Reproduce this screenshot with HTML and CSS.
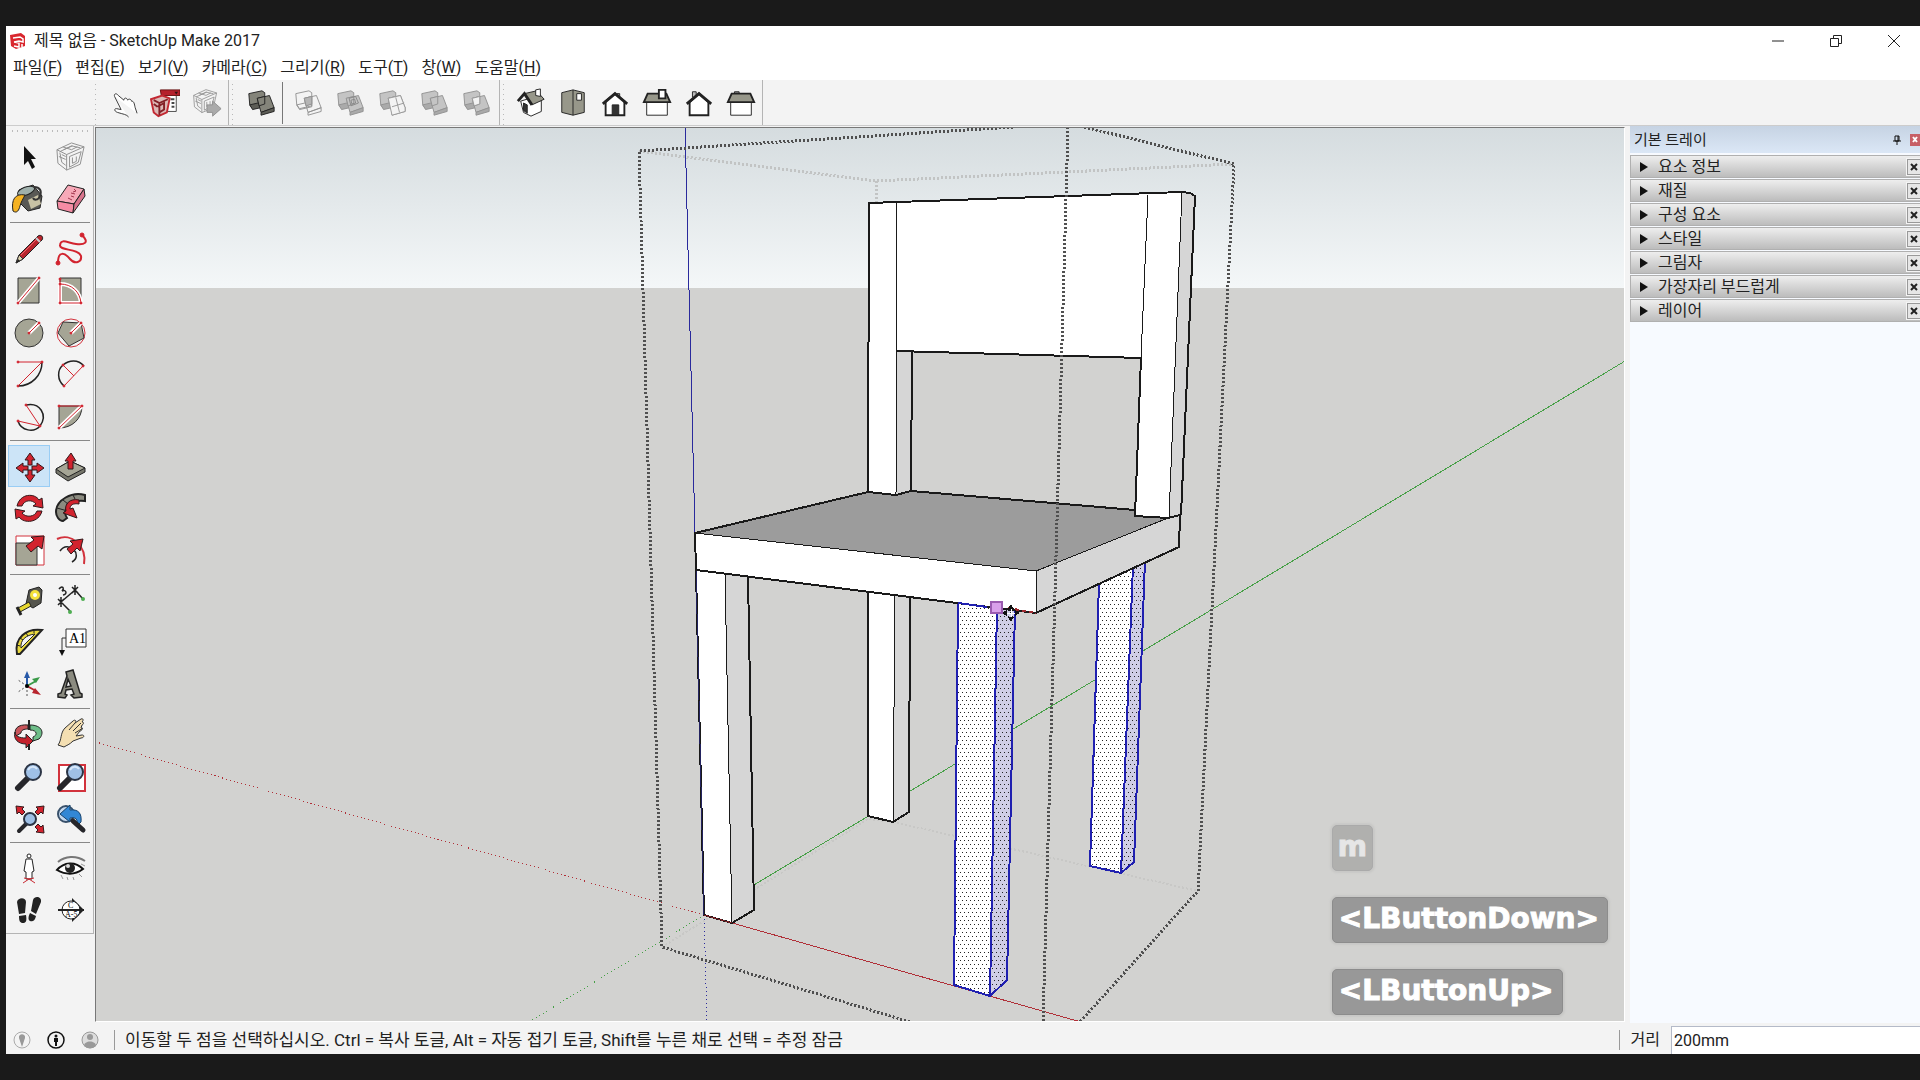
FILE: index.html
```html
<!DOCTYPE html>
<html lang="ko">
<head>
  <meta charset="UTF-8">
  <meta name="viewport" content="width=device-width, initial-scale=1.0">
  <title>제목 없음 - SketchUp Make 2017</title>
  <link rel="stylesheet" href="styles.css">
</head>
<body>

<svg class="defs" aria-hidden="true">
  <symbol id="solids" viewBox="0 0 32 32">
    <path class="face" d="M3 6l14-3 3 2v14l-13 3-3-4z"/>
    <path class="side" d="M4 18l13-3 3 2v3l-13 3z"/>
    <path class="face" d="M12 11l13-3 5 13-14 5z"/>
    <path class="side" d="M16 26l14-5v4l-14 4z"/>
    <path class="face" d="M12 11l8-2v8l-6 2z"/>
  </symbol>
  <symbol id="cube" viewBox="0 0 32 32">
    <path d="M2 9l15-7 13 4-4 18-14 6-9-7zM2 9l10 5 18-8M12 14v16M5 11l12-6 9 2M5 12l2 10 4 3M15 16l12-5-3 11-9 5zM9 9l9-4M7 14l4 2M18 17v6l4-2v-5M8 6l9 3 6-3M4 16l7 3"/>
  </symbol>
  <symbol id="lens" viewBox="0 0 32 32">
    <path d="M14 19L5 28" stroke="#26262a" stroke-width="6" stroke-linecap="round"/>
    <circle cx="20" cy="12" r="8" fill="#9fc0e6" stroke="#2b3444" stroke-width="2"/>
    <path d="M15 10c2-4 7-4 9-1" fill="none" stroke="#d8e8fa" stroke-width="2"/>
  </symbol>
</svg>

<div class="window">
  <header class="titlebar">
    <svg class="logo" viewBox="0 0 18 18"><path d="M1 3l11-2 4 3v10l-9 3-5-3z" fill="#d9272e"/><path d="M4 6l7-1 3 2v3l-4-1-5 1M5 10l5 1v4l-5-1M13 12v3" fill="none" stroke="#fff" stroke-width="1.5"/></svg>
    <h1>제목 없음 - SketchUp Make 2017</h1>
    <div class="window-buttons">
      <button aria-label="최소화"><svg viewBox="0 0 14 14"><path d="M1 7h12"/></svg></button>
      <button aria-label="이전 크기로"><svg viewBox="0 0 14 14"><path d="M1.500 4.500h8v8h-8zM4.500 4V1.500h8v8H10"/></svg></button>
      <button aria-label="닫기"><svg viewBox="0 0 14 14"><path d="M1 1l12 12M13 1L1 13"/></svg></button>
    </div>
  </header>

  <nav class="menubar">
    <button>파일(<u>F</u>)</button>
    <button>편집(<u>E</u>)</button>
    <button>보기(<u>V</u>)</button>
    <button>카메라(<u>C</u>)</button>
    <button>그리기(<u>R</u>)</button>
    <button>도구(<u>T</u>)</button>
    <button>창(<u>W</u>)</button>
    <button>도움말(<u>H</u>)</button>
  </nav>

  <div class="toolbars">
    <div class="toolbar warehouse">
      <button aria-label="상호작용"><svg viewBox="0 0 32 32"><path d="M7 9c-1-3 2-4 4-1l6 5c0-3 3-3 4 0 1-2 4-1 4 1 3 0 3 3 4 7l2 6M22 31c-2-3-6-3-12-5-3-1-4-4-1-4l5 1L7 9" fill="#fff" stroke="#333"/></svg></button>
      <button aria-label="3D Warehouse"><svg viewBox="0 0 32 32"><path d="M15 7h13v18H17z" fill="#fff" stroke="#444"/><path d="M11 2h21v6H12z" fill="#b5202c" stroke="#611"/><path d="M26 4h4l-2 3z" fill="#311"/><path d="M22 12h4M23 16h3M23 20h3" stroke="#444" stroke-width="2"/><path d="M1 12l12-4 8 3-3 15-9 4-5-4z" fill="#dcb8b6" stroke="#c22832" stroke-width="2"/><path d="M4 13l6 3 9-4M10 16v13M8 20l7-4v7l-5 3M4 17l4 3" fill="none" stroke="#832027" stroke-width="2"/></svg></button>
      <button aria-label="모델 공유"><svg class="wire" viewBox="0 0 32 32"><use href="#cube" width="28" height="28"/><path d="M16 18h6v-4l9 8-9 8v-4h-6z" fill="#aaa"/></svg></button>
    </div>
    <div class="toolbar solid-tools">
      <button class="outer" aria-label="외피"><svg class="solid dark" viewBox="0 0 32 32"><use href="#solids"/></svg></button>
      <button aria-label="교차"><svg class="solid hollow" viewBox="0 0 32 32"><use href="#solids"/><path class="mid" d="M12 11l8-2v8l-6 2z"/></svg></button>
      <button aria-label="결합"><svg class="solid" viewBox="0 0 32 32"><use href="#solids"/><path class="hole" d="M15 11l7-2 3 7-8 3zM17 13l4-1 1 4-4 1z"/></svg></button>
      <button aria-label="빼기"><svg class="solid" viewBox="0 0 32 32"><use href="#solids"/><path class="cut" d="M12 11l13-3 5 13v4l-14 4zM16 20l13-4M20 10l4 16"/></svg></button>
      <button aria-label="자르기"><svg class="solid" viewBox="0 0 32 32"><use href="#solids"/></svg></button>
      <button aria-label="분할"><svg class="solid" viewBox="0 0 32 32"><use href="#solids"/><path class="cut" d="M12 11l8-2v8l-6 2z"/></svg></button>
    </div>
    <div class="toolbar views">
      <button aria-label="등각투영"><svg class="house" viewBox="0 0 32 32"><path d="M5 14l3 12 8 4 11-5V14l-9-4z" fill="#fff"/><path d="M8 16l4 2v9l-4-3z" fill="#333"/><path class="roof" d="M9 6l13-3 8 9-13 6z"/><path d="M2 14l7-8 8 12" fill="none" stroke-width="3"/><path d="M21 2l5-1v8l-5-1z" fill="#fff"/></svg></button>
      <button aria-label="상단"><svg class="house" viewBox="0 0 32 32"><path class="roof" d="M4 5l12-3 12 3v21l-12 3-12-3z"/><path d="M16 2v27"/><path d="M20 6h5v7h-5z" fill="#fff"/></svg></button>
      <button aria-label="전면"><svg class="house" viewBox="0 0 32 32"><path d="M6 14v15h20V14L16 6z" fill="#fff" stroke-width="2"/><path d="M18 6h3v5" fill="#999"/><path d="M3 17L16 6l13 11" fill="none" stroke-width="3"/><path d="M13 18h7v11h-7z" fill="#333"/></svg></button>
      <button aria-label="우측"><svg class="house" viewBox="0 0 32 32"><path d="M5 14h22v15H5z" fill="#fff"/><path class="roof" d="M6 6h20l4 9H2z" stroke-width="2"/><path d="M18 2h7v9h-7z" fill="#fff" stroke-width="2"/></svg></button>
      <button aria-label="후면"><svg class="house" viewBox="0 0 32 32"><path d="M9 10V4h4v4" fill="#bbb"/><path d="M6 15v14h20V15L16 6z" fill="#fff" stroke-width="2"/><path d="M3 17L16 6l13 11" fill="none" stroke-width="3"/></svg></button>
      <button aria-label="좌측"><svg class="house" viewBox="0 0 32 32"><path d="M9 6V4h5v2" fill="#999"/><path d="M5 15h22v14H5z" fill="#fff"/><path class="roof" d="M6 6h20l4 9H2z" stroke-width="2"/></svg></button>
    </div>
  </div>

  <main class="workspace">
    <aside class="tools">
      <div class="grip"></div>
      <div class="tool-group">
        <button aria-label="선택"><svg viewBox="0 0 32 32"><path d="M11 6v19l4-4 4 8 3-2-4-8h5z" fill="#111"/></svg></button>
        <button aria-label="구성 요소 만들기"><svg class="wire" viewBox="0 0 32 32"><use href="#cube" y="1" width="31" height="31"/></svg></button>
        <button aria-label="페인트 통"><svg viewBox="0 0 32 32"><path d="M6 8L20 3l9 11-2 12-12 3-9-9z" fill="#595955" stroke="#222"/><ellipse cx="13" cy="9" rx="9" ry="4" transform="rotate(-20 13 9)" fill="#9fb0ac" stroke="#222"/><path d="M15 18l10-5 3 9-10 5z" fill="#c8c2a4"/><path d="M21 5c6 0 8 4 6 9s-6 4-7 2" fill="none" stroke="#333" stroke-width="2"/><path d="M12 13C2 11-2 18 0 29c4 3 6-1 7-5s3-7 5-11z" fill="#f4b223" stroke="#222"/></svg></button>
        <button aria-label="지우개"><svg viewBox="0 0 32 32"><path d="M13 3l16 4-10 15L2 19z" fill="#f7a9b8" stroke="#222"/><path d="M2 19l17 3-1 9-15-4z" fill="#f58ca4" stroke="#222"/><path d="M29 7l1 7-12 17 1-9z" fill="#d9748c" stroke="#222"/><path d="M19 7l2 2-3 1M16 11l4 1M16 14l3 1M13 16l4 2" fill="none" stroke="#a3364e"/></svg></button>
      </div>
      <div class="tool-group">
        <button aria-label="선"><svg viewBox="0 0 32 32"><path d="M3 31l3-8L25 4c3-2 6 1 4 4L10 27z" fill="#b8242c" stroke="#222"/><path d="M3 31l3-8 4 4z" fill="#ddd3ae" stroke="#333"/><path d="M3 31l2-4 2 2z" fill="#222"/><path d="M23 6l4 4" stroke="#ccc" stroke-width="2"/><path d="M8 23L23 8" stroke="#ed666c"/></svg></button>
        <button aria-label="자유형"><svg class="redline" viewBox="0 0 32 32"><path d="M27 3c8 8 2 10-6 9S6 6 5 13c-1 6 18 3 21 11 1 6-6 9-11 3S3 18 3 31" stroke-width="2"/><circle cx="27" cy="3" r="2"/><circle cx="3" cy="31" r="2"/></svg></button>
        <button aria-label="사각형"><svg viewBox="0 0 32 32"><path class="shape" d="M5 4h21v25H5z"/><path d="M5 29L26 4" stroke="#fff" stroke-width="4"/><g class="redline"><path d="M5 29L26 4"/><circle cx="5" cy="29" r="1"/><circle cx="26" cy="4" r="1"/></g></svg></button>
        <button aria-label="회전된 사각형"><svg viewBox="0 0 32 32"><path class="shape" d="M5 4h21v25H5z"/><path d="M5 10c12 0 20 8 21 19H5z" fill="none" stroke="#fff" stroke-width="4"/><g class="redline"><path d="M5 10c12 0 20 8 21 19H5V4"/><circle cx="5" cy="5" r="1"/><circle cx="5" cy="10" r="1"/><circle cx="5" cy="29" r="1"/><circle cx="26" cy="29" r="1"/></g></svg></button>
        <button aria-label="원"><svg viewBox="0 0 32 32"><circle class="shape" cx="16" cy="17" r="14"/><path d="M16 17l10-10" stroke="#fff" stroke-width="4"/><g class="redline"><path d="M16 17L26 7"/><circle cx="16" cy="17" r="1"/><circle cx="26" cy="7" r="1"/></g></svg></button>
        <button aria-label="다각형"><svg viewBox="0 0 32 32"><circle cx="16" cy="17" r="14" fill="none" stroke="#d2323c"/><path class="shape" d="M8 6l18 1 3 15-15 8L3 17z"/><path d="M16 17l10-10" stroke="#fff" stroke-width="4"/><g class="redline"><path d="M16 17L26 7"/><circle cx="16" cy="17" r="1"/><circle cx="26" cy="7" r="1"/></g></svg></button>
        <button aria-label="호"><svg viewBox="0 0 32 32"><path class="black" d="M29 4c0 13-10 24-24 24"/><g class="redline"><path d="M5 4h24L5 28"/><circle cx="5" cy="4" r="1"/><circle cx="29" cy="4" r="1"/><circle cx="5" cy="28" r="1"/></g></svg></button>
        <button aria-label="2점 호"><svg viewBox="0 0 32 32"><path class="black" d="M9 28C2 22 2 12 8 7s15-6 21 1"/><g class="redline"><path d="M9 28L28 8M8 7l11 11"/><circle cx="8" cy="7" r="1"/><circle cx="28" cy="8" r="1"/><circle cx="9" cy="28" r="1"/></g></svg></button>
        <button aria-label="3점 호"><svg viewBox="0 0 32 32"><path class="black" d="M13 5c14-3 22 10 14 21-6 7-19 5-22-5"/><g class="redline"><path d="M5 21l22 5L13 5"/><circle cx="13" cy="5" r="1"/><circle cx="5" cy="21" r="1"/><circle cx="27" cy="26" r="1"/></g></svg></button>
        <button aria-label="파이"><svg viewBox="0 0 32 32"><path class="shape" d="M4 6h23c0 13-10 22-23 22z"/><path d="M4 28L27 6" stroke="#fff" stroke-width="4"/><g class="redline"><path d="M4 28L27 6H4"/><circle cx="4" cy="6" r="1"/><circle cx="27" cy="6" r="1"/><circle cx="4" cy="28" r="1"/></g></svg></button>
      </div>
      <div class="tool-group">
        <button class="active" aria-label="이동"><svg class="red" viewBox="0 0 32 32"><path d="M17 3l5 7h-3v5h-4v-5h-3zM17 32l5-7h-3v-5h-4v5h-3zM3 18l7-5v3h5v4h-5v3zM31 18l-7-5v3h-5v4h5v3z"/></svg></button>
        <button aria-label="밀기/끌기"><svg viewBox="0 0 32 32"><path d="M1 19l14-8 15 7v4l-17 9L1 23z" fill="#77776c" stroke="#222"/><path d="M1 19l14-8 15 7-17 9z" fill="#a5a595" stroke="#222"/><path class="red" d="M16 3l5 8h-3v8h-5v-8h-3z"/></svg></button>
        <button aria-label="회전"><svg class="red" viewBox="0 0 32 32"><path d="M4 14C7 1 22 1 26 8l3-2 1 10-10-2 3-2c-4-5-12-4-14 2zM29 19c-3 12-18 13-23 6l-3 2-1-10 10 2-3 2c4 5 13 4 15-2z"/></svg></button>
        <button aria-label="따라가기"><svg viewBox="0 0 32 32"><path d="M30 9V3C17-1 1 8 1 20c0 4 3 9 7 9l4-3C6 17 16 7 30 9z" fill="#8b8b80" stroke="#222" stroke-width="2"/><path class="red" d="M24 8C15 6 9 12 11 19l-3 2 14 5-4-10-3 1c0-4 3-6 9-5z"/><path d="M2 16l7 2M8 8l5 4M18 3l2 4" stroke="#222"/></svg></button>
        <button aria-label="배율"><svg viewBox="0 0 32 32"><path d="M3 2h28v29H3z" fill="#fff" stroke="#d2323c"/><path class="shape" d="M3 9h21v22H3z"/><path class="red" d="M31 2l-2 13-4-3-7 6-5-6 8-6-3-3z"/></svg></button>
        <button aria-label="오프셋"><svg viewBox="0 0 32 32"><path d="M2 5c14-7 30 7 27 25" fill="none" stroke="#d2323c" stroke-width="2"/><path class="black" d="M5 17c8-12 24 4 12 11"/><path class="red" d="M28 5l-3 12-3-3-6 6-4-5 6-5-3-3z"/></svg></button>
      </div>
      <div class="tool-group">
        <button aria-label="줄자"><svg viewBox="0 0 32 32"><path d="M16 6l10-3 3 3-1 13-8 5-7-4z" fill="#55554d" stroke="#222"/><circle cx="22" cy="11" r="5" fill="#f4e13b"/><circle cx="22" cy="11" r="2" fill="#fff"/><path d="M16 18l2 4-11 6-2-4z" fill="#e7d72f" stroke="#222"/><path d="M4 23l4 8" stroke="#222" stroke-width="3"/></svg></button>
        <button aria-label="치수"><svg viewBox="0 0 32 32"><path class="black" d="M6 18L20 6m-3-3l6 6m0-6l-6 6m3-8v10M3 15l6 6m0-6l-6 6m3-8v10M20 6l8 9M6 18l9 9M4 5c3-4 6-1 3 2 4-2 6 3 1 4"/><circle cx="28" cy="15" r="2" fill="#4fae52"/><circle cx="15" cy="28" r="2" fill="#4fae52"/></svg></button>
        <button aria-label="각도기"><svg viewBox="0 0 32 32"><path d="M4 28C1 12 13 2 29 4L7 28z" fill="#e9d940" stroke="#222" stroke-width="2"/><path d="M8 22C7 14 13 9 22 8z" fill="#f4f4f4" stroke="#222"/><path d="M4 19l3 1M7 12l3 2M13 7l2 3M21 5v2" stroke="#222"/></svg></button>
        <button aria-label="텍스트"><svg viewBox="0 0 32 32"><path d="M11 3h20v18H11z" fill="#fff" stroke="#333"/><path d="M11 12H7v13" fill="none" stroke="#333"/><path d="M4 24h6l-3 6z" fill="#111"/><text x="14" y="17">A1</text></svg></button>
        <button aria-label="축"><svg viewBox="0 0 32 32"><path d="M14 18v-8" stroke="#2759a8" stroke-width="2"/><path d="M11 10l3-7 3 7z" fill="#2759a8"/><path d="M14 18l9-5" stroke="#3a9a48" stroke-width="2"/><path d="M19 11l8-2-4 6z" fill="#3a9a48"/><path d="M14 18l9 5" stroke="#b8252e" stroke-width="2"/><path d="M22 20l6 7-9-2z" fill="#b8252e"/><path d="M14 18v12M14 18L5 24M14 18L5 12" stroke="#555" stroke-dasharray="2 2"/><circle cx="14" cy="18" r="2"/></svg></button>
        <button aria-label="3D 텍스트"><svg viewBox="0 0 32 32"><path d="M11 4l7-2 7 23 2 1v3l-8 1-3-3 3-1-2-5-6 1-1 4 2 1-2 3-7-1v-3l3-1 6-17zM13 11l-2 8 5-1z" fill="#8b8b80" fill-rule="evenodd" stroke="#222" stroke-width="1.500"/></svg></button>
      </div>
      <div class="tool-group">
        <button aria-label="궤도"><svg viewBox="0 0 32 32"><path d="M15 7C5 6 0 11 3 18l5-3c0-3 3-4 7-4z" fill="#c8545a" stroke="#222"/><path d="M17 7c12 0 15 8 9 14l-6 2v-4c5-2 4-7-3-7z" fill="#6dbd88" stroke="#222"/><path d="M2 14c0 4 4 6 11 6v-4l7 7-7 7v-4C5 26 0 21 2 14z" fill="#c4212c" stroke="#222"/><path d="M16 2v10M16 26v6" stroke="#222" stroke-width="2"/></svg></button>
        <button aria-label="화면 이동"><svg viewBox="0 0 32 32"><path d="M3 27c4-5 2-12 7-17l8-7c2-2 4 0 2 2l6-4c2-1 3 1 1 3 2 0 2 2 0 3l-1 3c2 0 1 3-1 3l-4 5 6-1c3 0 2 3-1 3l-8 3c-4 4-6 4-9 6z" fill="#f4dfb2" stroke="#333"/><path d="M14 12l6-7M18 13l8-8M20 15l8-5" stroke="#333"/></svg></button>
        <button aria-label="확대/축소"><svg viewBox="0 0 32 32"><use href="#lens"/></svg></button>
        <button aria-label="창 확대/축소"><svg viewBox="0 0 32 32"><path d="M4 5h26v26H4z" fill="#fff" stroke="#d2323c" stroke-width="2"/><use href="#lens"/></svg></button>
        <button aria-label="범위 확대/축소"><svg viewBox="0 0 32 32"><path class="red" d="M3 4l8 1-2 2 3 3-3 3-3-3-2 2zM31 4l-8 1 2 2-3 3 3 3 3-3 2 2zM31 31l-8-1 2-2-3-3 3-3 3 3 2-2z"/><path d="M13 22l-7 7" stroke="#26262a" stroke-width="4" stroke-linecap="round"/><circle cx="17" cy="17" r="6" fill="#9fc0e6" stroke="#2b3444" stroke-width="2"/></svg></button>
        <button aria-label="이전"><svg viewBox="0 0 32 32"><circle cx="11" cy="12" r="8" fill="#c4d8ef" stroke="#38506a" stroke-width="2"/><path d="M5 12l10-9v5c8-1 12 3 11 12l-4 4c1-7-1-9-7-8v4z" fill="#3287d5" stroke="#17426b"/><path d="M18 19l10 9" stroke="#26262a" stroke-width="5" stroke-linecap="round"/></svg></button>
      </div>
      <div class="tool-group">
        <button aria-label="카메라 배치"><svg viewBox="0 0 32 32"><circle cx="16" cy="4" r="2" fill="#fff" stroke="#222"/><path d="M13 7h6l2 12-2 1v7h-6v-7l-2-1z" fill="#fff" stroke="#222"/><path d="M10 31l6-4 6 4M11 26l5 1 5-1" fill="none" stroke="#c82831"/></svg></button>
        <button aria-label="둘러보기"><svg viewBox="0 0 32 32"><path d="M3 10c7-6 18-7 27-1" fill="none" stroke="#777" stroke-width="2"/><path d="M2 18c7-8 18-9 26-1-8 6-17 6-26 1z" fill="#fff" stroke="#111" stroke-width="2"/><circle cx="15" cy="16" r="5" fill="#222"/><circle cx="13" cy="14" r="2" fill="#ddd"/><path d="M6 23l2 4M12 25l1 3M18 25l1 3M24 22l3 3M26 12l4 2" stroke="#999"/></svg></button>
        <button aria-label="걷기"><svg viewBox="0 0 32 32"><path d="M4 8c1-5 9-5 9 0l-1 11-6 1zM6 22l7-1c1 6 0 8-3 8s-4-2-4-7zM20 6c2-5 9-3 8 2l-5 12-5-3zM17 19l6 3c-1 5-4 6-6 5s-2-4 0-8z" fill="#222"/></svg></button>
        <button aria-label="단면 평면"><svg viewBox="0 0 32 32"><path d="M17 4l12 12-12 12z" fill="#222"/><circle cx="16" cy="16" r="9" fill="#fff" stroke="#222"/><path d="M3 16h26" stroke="#222" stroke-width="2"/><text class="tiny" x="13" y="14">C</text><text class="tiny" x="10" y="23">A-5</text></svg></button>
      </div>
    </aside>

    <section class="canvas">
      <svg class="scene" viewBox="96 128 1528 893" preserveAspectRatio="xMinYMin slice">
        <defs>
          <linearGradient id="sky" x1="0" y1="0" x2="0" y2="1">
            <stop offset="0" stop-color="#d5dcdf"/>
            <stop offset="1" stop-color="#f4f7f8"/>
          </linearGradient>
          <pattern id="dots" width="8" height="8" patternUnits="userSpaceOnUse">
            <path d="M0 0h1v1H0zM4 0h1v1H4zM2 4h1v1H2zM6 4h1v1H6z" fill="#222"/>
          </pattern>
        </defs>
        <rect x="96" y="128" width="1900" height="160" fill="url(#sky)"/>
        <rect x="96" y="288" width="1900" height="900" fill="#d2d2d0"/>

        <!-- axes -->
        <g class="axis">
          <path class="blue" d="M685 127L695 533"/>
          <path class="blue far" d="M704 915L707 1022"/>
          <path class="green" d="M704 915L1625 361"/>
          <path class="green far" d="M704 915L529 1022"/>
          <path class="red-axis" d="M704 915L1081 1022"/>
          <path class="red-axis far" d="M704 915L96 742"/>
        </g>

        <!-- hidden side of the bounding box -->
        <path class="bounds back" d="M639 151L876 181L1234 164M876 181V203"/>
        <path class="bounds back faint" d="M662 947L868 819L893 822L1198 891"/>

        <!-- back posts and rest -->
        <path class="white" d="M869 203L1182 192L1169 518L1135 516L1141 358L896 351V495L868 492z"/>
        <path class="shade" d="M896 351H912L911 491L896 495zM1182 192L1195 195L1181 515L1169 518z"/>
        <path class="thin" d="M897 203L896 495M1148 195L1141 358M1182 192L1169 518"/>
        <path class="thick" d="M868 492L869 203L1182 192L1190 193L1195 196L1181 515M896 351L1141 358L1135 516M912 352L911 491"/>

        <!-- legs -->
        <path class="white" d="M696 570L725 574L732 923L704 915zM868 592L895 596L893 822L868 816z"/>
        <path class="shade" d="M725 574L748 576L754 910L732 923zM895 596L910 597L909 812L893 822z"/>
        <path class="thin" d="M725 574L732 923M895 596L893 822"/>
        <path class="thick" d="M696 570L704 915L732 923L754 910L748 576M868 592V816L893 822L909 812L910 597"/>
        <path d="M704 915L732 923" stroke="#7a2025"/>
        <path d="M696 570L704 915" stroke="#23235f"/>

        <!-- selected legs -->
        <g class="selected">
          <path class="white" d="M958 600L997 605L990 996L954 985zM1099 580L1133 563L1121 873L1090 866z"/>
          <path class="lilac" d="M997 605L1015 608L1007 980L990 996zM1133 563L1145 558L1134 862L1121 873z"/>
          <path class="dotted-face" d="M958 600L1015 608L1007 980L990 996L954 985zM1099 580L1145 558L1134 862L1121 873L1090 866z"/>
          <path class="edge" d="M958 604L954 985L990 996L1007 980L1015 608M997 605L990 996M1099 583L1090 866L1121 873L1134 862L1145 560M1133 565L1121 873"/>
        </g>

        <!-- seat -->
        <path d="M695 533L868 492L896 495L911 491L1135 510V516L1168 518L1036 571z" fill="#9c9c9c"/>
        <path class="white" d="M695 533L1036 571V613L696 570z"/>
        <path class="shade" d="M1036 571L1168 518L1180 515L1179 547L1036 613z"/>
        <path class="thin" d="M695 533L1036 571L1168 518M1036 571V613"/>
        <path class="thick" d="M696 570L695 533L868 492L896 495L911 491L1135 510V516L1168 518L1180 515L1179 547L1036 613L696 570"/>
        <path class="edge" d="M958 603L987 607"/>
        <path d="M1008 608L1036 613" stroke="#a02a30" stroke-dasharray="4 3" stroke-width="2"/>

        <path class="bounds" d="M1013 127L639 151L662 947L910 1022M1084 127L1234 164L1198 891L1080 1022M1068 127L1043 1022"/>

        <!-- inference point and move cursor -->
        <rect x="991" y="602" width="11" height="11" fill="#d9a0ea" stroke="#9b5bb0" stroke-width="2"/>
        <path d="M1011 604l3 5h-6zM1011 622l3-5h-6zM1002 613l5-3v6zM1020 613l-5-3v6z" fill="#111"/>
        <path d="M1011 609v8M1007 613h8" stroke="#fff"/>
      </svg>
      <div class="keycast">
        <kbd class="fading">m</kbd>
        <kbd>&lt;LButtonDown&gt;</kbd>
        <kbd>&lt;LButtonUp&gt;</kbd>
      </div>
    </section>

    <aside class="tray">
      <header>
        <h2>기본 트레이</h2>
        <button class="pin" aria-label="자동 숨기기"><svg viewBox="0 0 10 10"><path d="M3 1h4v5H3zM6 1v5M1 6h8M5 6v4" fill="none" stroke="#111" stroke-width="1"/></svg></button>
        <button class="tray-close" aria-label="트레이 닫기"><svg viewBox="0 0 8 8"><path d="M2 1l4 5M6 1L2 6"/></svg></button>
      </header>
      <div class="panel"><button class="expand">요소 정보</button><button class="close" aria-label="요소 정보 닫기"><svg viewBox="0 0 8 8"><path d="M1 1l6 6M7 1L1 7"/></svg></button></div>
      <div class="panel"><button class="expand">재질</button><button class="close" aria-label="재질 닫기"><svg viewBox="0 0 8 8"><path d="M1 1l6 6M7 1L1 7"/></svg></button></div>
      <div class="panel"><button class="expand">구성 요소</button><button class="close" aria-label="구성 요소 닫기"><svg viewBox="0 0 8 8"><path d="M1 1l6 6M7 1L1 7"/></svg></button></div>
      <div class="panel"><button class="expand">스타일</button><button class="close" aria-label="스타일 닫기"><svg viewBox="0 0 8 8"><path d="M1 1l6 6M7 1L1 7"/></svg></button></div>
      <div class="panel"><button class="expand">그림자</button><button class="close" aria-label="그림자 닫기"><svg viewBox="0 0 8 8"><path d="M1 1l6 6M7 1L1 7"/></svg></button></div>
      <div class="panel"><button class="expand">가장자리 부드럽게</button><button class="close" aria-label="가장자리 부드럽게 닫기"><svg viewBox="0 0 8 8"><path d="M1 1l6 6M7 1L1 7"/></svg></button></div>
      <div class="panel"><button class="expand">레이어</button><button class="close" aria-label="레이어 닫기"><svg viewBox="0 0 8 8"><path d="M1 1l6 6M7 1L1 7"/></svg></button></div>
    </aside>
  </main>

  <footer class="statusbar">
    <button aria-label="지리적 위치"><svg viewBox="0 0 20 20"><circle cx="10" cy="10" r="8" fill="none" stroke="#aaa"/><path d="M10 17L7 8c-1-5 7-5 6 0z" fill="#999"/></svg></button>
    <button aria-label="크레디트"><svg viewBox="0 0 20 20"><circle cx="10" cy="10" r="8" fill="none" stroke="#111" stroke-width="1.500"/><circle cx="10" cy="6" r="1.500" fill="#111"/><path d="M8 8h4v4h-1v4H9v-4H8z" fill="#111"/></svg></button>
    <button aria-label="로그인"><svg viewBox="0 0 20 20"><circle cx="10" cy="10" r="8" fill="#ddd" stroke="#999"/><circle cx="10" cy="7" r="3" fill="#999"/><path d="M4 16c0-6 12-6 12 0-4 3-8 3-12 0z" fill="#999"/></svg></button>
    <p class="hint">이동할 두 점을 선택하십시오. Ctrl = 복사 토글, Alt = 자동 접기 토글, Shift를 누른 채로 선택 = 추정 잠금</p>
    <label for="distance">거리</label>
    <input id="distance" type="text" value="200mm">
  </footer>
</div>

</body>
</html>
```
FILE: styles.css
```css
:root {
  --panel: #f3f3f3;
  --line: #b4b4b4;
  --red: #d2232e;
  --olive: #a5a595;
}
* {
  box-sizing: border-box;
}
body {
  margin: 0;
  height: 100vh;
  padding: 26px 0 26px 6px;
  background: #1a1a1a;
  color: #222;
  font-family: Roboto, "Noto Sans CJK KR", sans-serif;
  font-size: 16px;
  line-height: 24px;
  overflow: hidden;
}
button {
  margin: 0;
  padding: 0;
  border: 0;
  background: none;
  color: inherit;
  font: inherit;
}
h1, h2, p {
  margin: 0;
  font-size: 16px;
  font-weight: normal;
}
.defs {
  position: absolute;
  width: 0;
  height: 0;
}
.window {
  display: flex;
  flex-direction: column;
  height: 100%;
  background: var(--panel);
}

/* title and menus */
.titlebar {
  display: flex;
  align-items: center;
  height: 29px;
  padding-left: 3px;
  background: #fff;
}
.logo {
  width: 18px;
  height: 18px;
  margin-right: 7px;
}
.window-buttons {
  display: flex;
  margin-left: auto;
  margin-right: -3px;
}
.window-buttons button {
  display: grid;
  place-items: center;
  width: 58px;
  height: 28px;
}
.window-buttons svg {
  width: 14px;
  height: 14px;
  fill: none;
  stroke: #222;
}
.menubar {
  display: flex;
  gap: 13px;
  height: 25px;
  padding-left: 7px;
  background: #fff;
}
.menubar u {
  text-underline-offset: 2px;
}

/* horizontal toolbars */
.toolbars {
  display: flex;
  height: 46px;
  padding-left: 86px;
  border-bottom: 1px solid #ccc;
}
.toolbar {
  display: flex;
  align-items: center;
  padding-left: 10px;
  border-right: 1px solid var(--line);
  background: radial-gradient(circle, #b8b8b8 1px, transparent 1px) 2px 2px / 3px 5px repeat-y;
}
.toolbar button {
  display: grid;
  place-items: center;
  width: 42px;
  height: 42px;
}
.toolbar svg {
  width: 30px;
  height: 30px;
}
.solid-tools {
  padding-right: 2px;
}
.solid-tools .outer {
  width: 44px;
  margin-right: 4px;
  border-right: 1px solid #777;
}
.solid {
  --face: #c4c4c4;
  --side: #aaa;
  --edge: #929292;
}
.solid.dark {
  --face: #84847a;
  --side: #5d5d56;
  --edge: #222;
}
.solid.hollow {
  --face: none;
  --side: none;
}
.face { fill: var(--face); stroke: var(--edge); }
.side { fill: var(--side); stroke: var(--edge); }
.mid { fill: #b5b5b5; stroke: #929292; }
.hole { fill: none; stroke: #888; }
.cut { fill: #f3f3f3; stroke: #999; }
.wire { fill: none; stroke: #909090; }
.house { stroke: #222; }
.house .roof { fill: #97978a; }

/* drawing tools */
.workspace {
  display: flex;
  flex: 1;
  min-height: 0;
}
.tools {
  align-self: flex-start;
  width: 88px;
  padding: 3px 0 2px 2px;
  border-right: 1px solid var(--line);
  border-bottom: 1px solid var(--line);
}
.grip {
  height: 6px;
  margin: 0 2px;
  background: radial-gradient(circle, #bbb 1px, transparent 1px) 0 0 / 5px 4px repeat-x;
}
.tool-group {
  display: grid;
  grid-template-columns: 42px 42px;
  grid-auto-rows: 42px;
}
.tool-group + .tool-group {
  margin-top: 3px;
  padding-top: 5px;
  background: linear-gradient(#888, #888) 2px 0 / 80px 1px no-repeat;
}
.tool-group button {
  display: grid;
  place-items: center;
}
.tool-group button.active {
  background: #cce4f7;
  border: 1px solid #99cdf5;
}
.tool-group svg {
  width: 32px;
  height: 32px;
  overflow: visible;
}
.tool-group text {
  font: 14px "Liberation Serif", serif;
}
.tool-group text.tiny {
  font-size: 8px;
}
.red { fill: var(--red); stroke: #33191b; }
.redline { fill: none; stroke: var(--red); }
.redline circle { fill: var(--red); }
.shape { fill: var(--olive); stroke: #333; }
.black { fill: none; stroke: #222; stroke-width: 1.5; }

/* model */
.canvas {
  position: relative;
  flex: 1;
  min-width: 0;
  margin: 1px 5px 2px 1px;
  border: solid;
  border-width: 1px;
  border-color: #777 #fff #fff #777;
}
.scene {
  display: block;
  width: 100%;
  height: 100%;
  fill: none;
  shape-rendering: crispEdges;
}
.axis .blue { stroke: #2a2a9c; }
.axis .green { stroke: #47a047; }
.axis .red-axis { stroke: #b03038; }
.axis .far { stroke-dasharray: 1 3; }
.bounds {
  stroke: #505050;
  stroke-width: 3;
  stroke-dasharray: 2 2;
}
.bounds.back { stroke: #c2c4c4; }
.bounds.faint { stroke: #c8c8c6; stroke-width: 2; }
.white { fill: #fff; }
.shade { fill: #d6d6d6; }
.lilac { fill: #d0cee6; }
.thin { stroke: #1a1a1a; }
.thick { stroke: #1a1a1a; stroke-width: 2; stroke-linejoin: round; }
.edge { stroke: #2020b0; stroke-width: 2; }
.dotted-face { fill: url(#dots); }
.keycast {
  position: absolute;
  right: 16px;
  bottom: 6px;
  display: flex;
  flex-direction: column;
  align-items: flex-start;
  gap: 26px;
}
.keycast kbd {
  height: 46px;
  padding: 0 8px 0 6px;
  border: 1px solid #8c8c8c;
  border-radius: 5px;
  background: #989898;
  box-shadow: 0 0 2px 2px #c8c8c6;
  color: #fff;
  font: bold 28px/42px "DejaVu Sans", sans-serif;
  -webkit-text-stroke: 1px;
}
.keycast .fading {
  padding: 0 5px;
  border-color: #aaa;
  background: #b0b0ae;
  color: #e6e6e6;
}

/* tray */
.tray {
  width: 290px;
  margin-bottom: 1px;
  background: #f7faff;
}
.tray header {
  display: flex;
  align-items: center;
  height: 27px;
  margin-bottom: 2px;
  padding-left: 4px;
  background: linear-gradient(#c6d3e3, #dbe7f6);
}
.tray h2 {
  font-size: 15px;
}
.pin {
  width: 10px;
  height: 24px;
  margin-left: auto;
  margin-right: 8px;
}
.pin svg {
  width: 10px;
  height: 10px;
}
.tray-close {
  display: grid;
  place-items: center;
  width: 10px;
  height: 12px;
  background: #c75f66;
  stroke: #fff;
}
.tray-close svg,
.close svg {
  width: 8px;
  height: 8px;
  stroke-width: 2;
}
.panel {
  display: flex;
  align-items: center;
  height: 23px;
  margin-bottom: 1px;
  border: 1px solid #b0b0b0;
  border-right: 0;
  background: linear-gradient(#eee, #bcbcbc);
}
.expand {
  display: flex;
  flex: 1;
  align-items: center;
  gap: 10px;
  line-height: 20px;
}
.expand::before {
  content: "";
  margin-left: 9px;
  border: solid transparent;
  border-width: 5px 0 5px 8px;
  border-left-color: #111;
}
.panel .close {
  display: grid;
  place-items: center;
  width: 13px;
  height: 16px;
  border: 1px solid #999;
  border-right: 0;
  outline: 1px solid #f4f4f4;
  background: #e6e6e6;
  stroke: #222;
}

/* status bar */
.statusbar {
  display: flex;
  align-items: center;
  height: 30px;
  padding: 1px 0 0 6px;
}
.statusbar button {
  width: 20px;
  height: 20px;
  margin-right: 14px;
}
.statusbar svg {
  display: block;
  width: 20px;
  height: 20px;
}
.hint {
  flex: 1;
  height: 20px;
  padding-left: 10px;
  border: solid #999;
  border-width: 0 1px;
  font-size: 17px;
  line-height: 20px;
  white-space: nowrap;
}
.statusbar label {
  padding: 0 11px;
}
.statusbar input {
  width: 249px;
  height: 28px;
  margin-top: 1px;
  padding: 0 2px;
  border: 1px solid #b4bac8;
  border-width: 1px 0 0 1px;
  background: #fff;
  color: #222;
  font: inherit;
}
```
